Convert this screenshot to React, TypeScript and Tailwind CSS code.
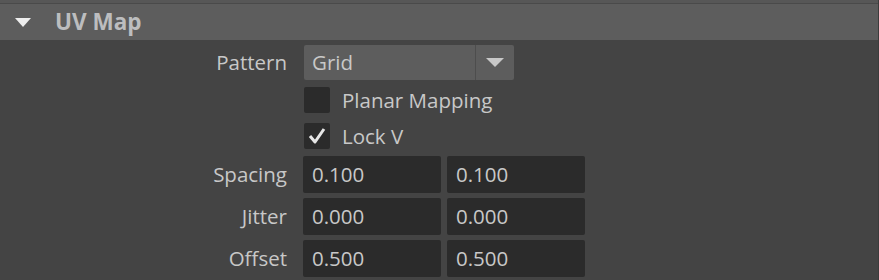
import React from 'react';

const rows = [
  { label: 'Spacing', a: '0.100', b: '0.100' },
  { label: 'Jitter', a: '0.000', b: '0.000' },
  { label: 'Offset', a: '0.500', b: '0.500' },
];

const font = { fontFamily: '"Open Sans", "Noto Sans", sans-serif' };

const Checkbox = ({ checked, label }: { checked: boolean; label: string }) => (
  <div className="flex items-center h-[26px]">
    <div className="w-[26px] h-[26px] rounded-[2px] bg-[#2b2b2b] flex items-center justify-center">
      {checked && (
        <svg width="20" height="20" viewBox="0 0 20 20">
          <polyline points="3,10 8,16 17,3" fill="none" stroke="#e6e6e6" strokeWidth="3" strokeLinejoin="round" />
        </svg>
      )}
    </div>
    <span className="ml-[12px] text-[20.5px] text-[#c8c8c8]">{label}</span>
  </div>
);

export default function App() {
  return (
    <div className="w-[879px] h-[280px] bg-[#444444] overflow-hidden border-r border-[#3c3c3c]" style={font}>
      {/* section header */}
      <div className="h-[3px] bg-[#575757]" />
      <div className="h-[1px] bg-[#4a4a4a]" />
      <div className="h-[36px] bg-[#5d5d5d] flex items-center">
        <svg className="ml-[15px]" width="16" height="9" viewBox="0 0 16 9">
          <polygon points="0,0 16,0 8,9" fill="#eeeeee" />
        </svg>
        <span className="ml-[24px] text-[22.5px] font-bold text-[#bcbdbf] leading-none">UV Map</span>
      </div>

      <div className="pt-[5px]">
        {/* pattern dropdown */}
        <div className="flex items-center h-[35px]">
          <div className="w-[288px] pr-[1px] text-right text-[20.5px] text-[#c8c8c8]">Pattern</div>
          <div className="ml-[16px] w-[210px] h-[35px] rounded-[2px] bg-[#5d5d5d] flex">
            <div className="flex-1 pl-[8px] flex items-center text-[20.5px] text-[#c8c8c8]">Grid</div>
            <div className="w-[1px] bg-[#4d4d4d]" />
            <div className="w-[38px] flex items-center justify-center">
              <svg width="18" height="9" viewBox="0 0 18 9">
                <polygon points="0,0 18,0 9,9" fill="#c8c8c8" />
              </svg>
            </div>
          </div>
        </div>

        <div className="ml-[304px] mt-[7px] flex flex-col gap-[10px]">
          <Checkbox checked={false} label="Planar Mapping" />
          <Checkbox checked={true} label="Lock V" />
        </div>

        <div className="mt-[7px] flex flex-col gap-[5px]">
          {rows.map((r) => (
            <div key={r.label} className="flex items-center h-[37px]">
              <div className="w-[288px] pr-[1px] text-right text-[20.5px] text-[#c8c8c8]">{r.label}</div>
              <div className="ml-[15px] flex gap-[6px]">
                <div className="w-[138px] h-[37px] rounded-[2px] bg-[#2b2b2b] pl-[9px] flex items-center text-[20.5px] text-[#c8c8c8]">{r.a}</div>
                <div className="w-[138px] h-[37px] rounded-[2px] bg-[#2b2b2b] pl-[9px] flex items-center text-[20.5px] text-[#c8c8c8]">{r.b}</div>
              </div>
            </div>
          ))}
        </div>
      </div>
    </div>
  );
}
